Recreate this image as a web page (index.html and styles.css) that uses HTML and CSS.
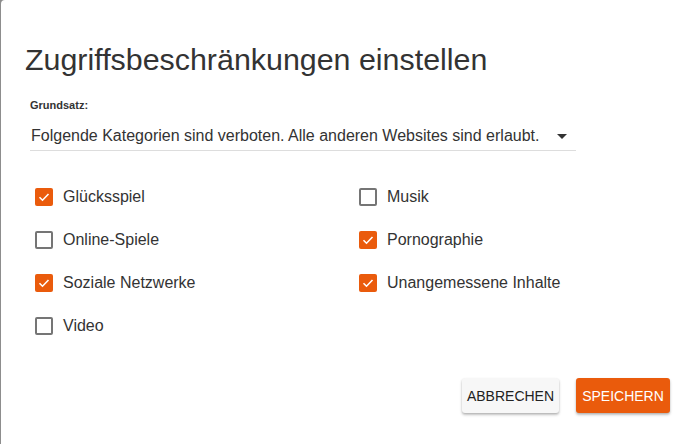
FILE: index.html
```html
<!DOCTYPE html>
<html lang="de">
<head>
<meta charset="utf-8">
<title>Zugriffsbeschränkungen einstellen</title>
<link rel="stylesheet" href="styles.css">
</head>
<body>
<div class="dialog">
  <h1 class="title">Zugriffsbeschränkungen einstellen</h1>
  <div class="field">
    <label class="field-label">Grundsatz:</label>
    <div class="select">
      <span class="select-value">Folgende Kategorien sind verboten. Alle anderen Websites sind erlaubt.</span>
      <svg class="select-arrow" width="10" height="5" viewBox="0 0 10 5"><path d="M0 0h10L5 5z" fill="#333"/></svg>
    </div>
  </div>
  <div class="options">
    <label class="option"><span class="box checked"><svg width="18" height="18" viewBox="0 0 18 18"><path d="M4.5 9.2l3 3 6-6.2" fill="none" stroke="#fff" stroke-width="1.6"/></svg></span><span>Glücksspiel</span></label>
    <label class="option"><span class="box"></span><span>Musik</span></label>
    <label class="option"><span class="box"></span><span>Online-Spiele</span></label>
    <label class="option"><span class="box checked"><svg width="18" height="18" viewBox="0 0 18 18"><path d="M4.5 9.2l3 3 6-6.2" fill="none" stroke="#fff" stroke-width="1.6"/></svg></span><span>Pornographie</span></label>
    <label class="option"><span class="box checked"><svg width="18" height="18" viewBox="0 0 18 18"><path d="M4.5 9.2l3 3 6-6.2" fill="none" stroke="#fff" stroke-width="1.6"/></svg></span><span>Soziale Netzwerke</span></label>
    <label class="option"><span class="box checked"><svg width="18" height="18" viewBox="0 0 18 18"><path d="M4.5 9.2l3 3 6-6.2" fill="none" stroke="#fff" stroke-width="1.6"/></svg></span><span>Unangemessene Inhalte</span></label>
    <label class="option"><span class="box"></span><span>Video</span></label>
  </div>
  <div class="actions">
    <button class="btn btn-default">ABBRECHEN</button>
    <button class="btn btn-primary">SPEICHERN</button>
  </div>
</div>
</body>
</html>
```
FILE: styles.css
```css
html, body {
  margin: 0;
  padding: 0;
  height: 100%;
}
body {
  background: #8d8d8d;
  font-family: "Liberation Sans", Arial, sans-serif;
  color: #333;
  overflow: hidden;
}
.dialog {
  margin-left: 1px;
  height: 444px;
  background: #fff;
  border-top-left-radius: 4px;
  box-sizing: border-box;
  padding: 41px 0 0 24px;
}
.title {
  margin: 0;
  font-size: 30.4px;
  font-weight: 400;
  line-height: 36px;
  color: #333;
}
.field {
  margin: 21px 0 0 5px;
  width: 546px;
}
.field-label {
  display: block;
  font-size: 11px;
  font-weight: 700;
  line-height: 14px;
  color: #333;
}
.select {
  display: flex;
  align-items: center;
  justify-content: space-between;
  margin-top: 13px;
  padding: 0 9px 3px 1px;
  border-bottom: 1px solid #ddd;
  font-size: 16px;
  line-height: 22px;
}
.select-arrow {
  display: block;
}
.options {
  display: grid;
  grid-template-columns: 324px 324px;
  row-gap: 25px;
  margin: 37px 0 0 10px;
}
.option {
  display: flex;
  align-items: center;
  gap: 10px;
  font-size: 16px;
  line-height: 18px;
  color: #333;
}
.box {
  width: 18px;
  height: 18px;
  box-sizing: border-box;
  border: 2px solid #757575;
  border-radius: 2px;
  flex: none;
}
.box.checked {
  background: #ea5b0c;
  border: none;
}
.box svg {
  display: block;
}
.actions {
  display: flex;
  justify-content: flex-end;
  gap: 17px;
  margin-top: 43px;
  padding-right: 30px;
}
.btn {
  height: 35px;
  border: none;
  border-radius: 3px;
  font-family: "Liberation Sans", Arial, sans-serif;
  font-size: 14px;
  padding: 0 4px;
  box-shadow: 0 2px 3px rgba(0,0,0,0.22), 0 1px 2px rgba(0,0,0,0.12);
}
.btn-default {
  background: #f7f7f7;
  color: #222;
  width: 97px;
}
.btn-primary {
  background: #ea5b0c;
  color: #fff;
  width: 94px;
}
```
